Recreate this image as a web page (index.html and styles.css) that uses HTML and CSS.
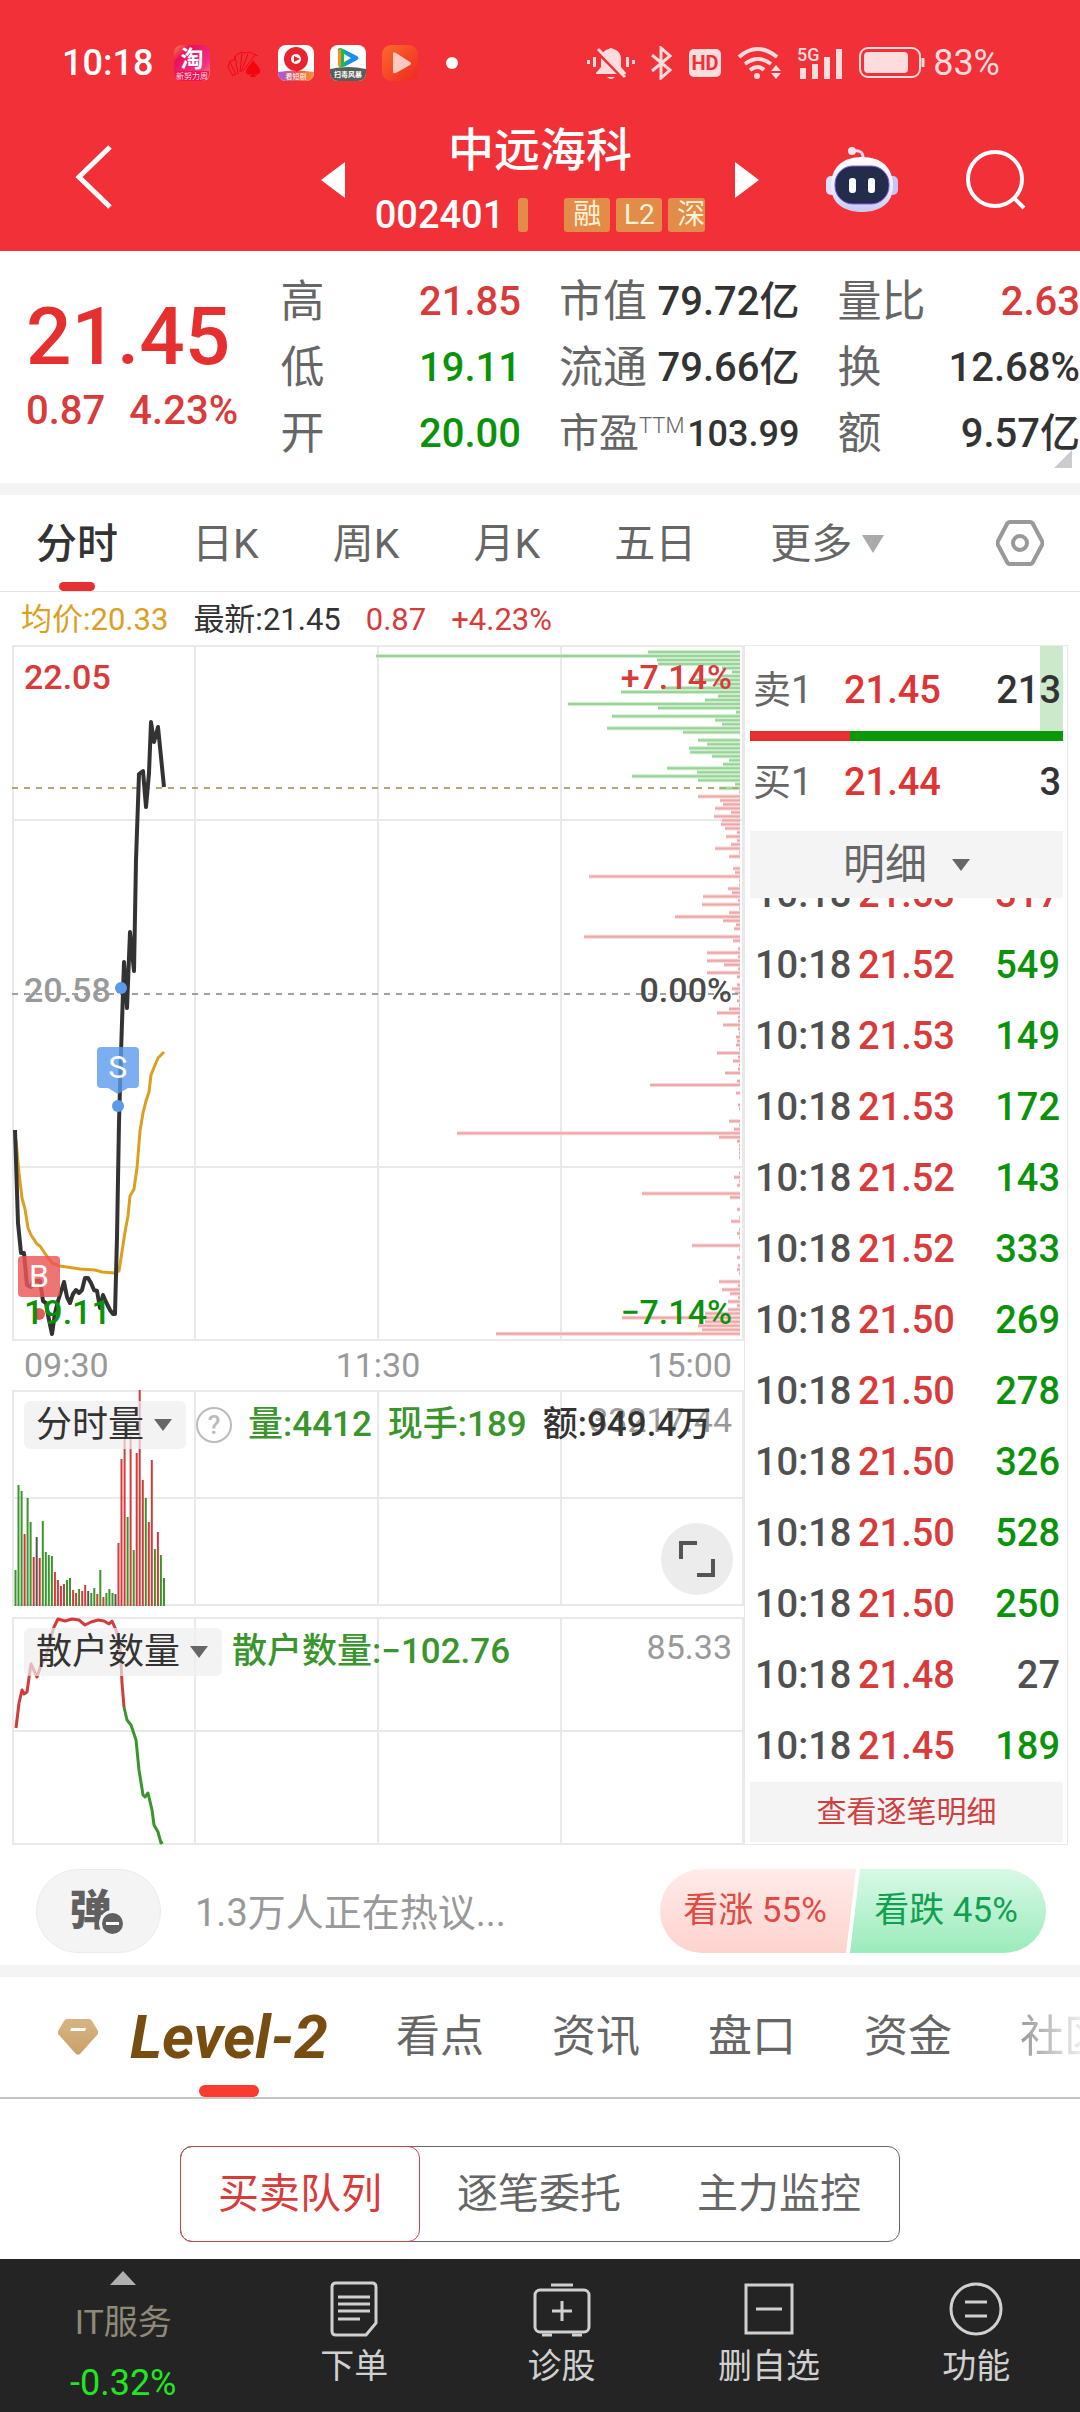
FILE: index.html
```html
<!DOCTYPE html>
<html lang="zh-CN">
<head>
<meta charset="utf-8">
<meta name="viewport" content="width=device-width, initial-scale=1">
<title>中远海科 002401</title>
<link rel="stylesheet" href="styles.css">
</head>
<body>
<header class="top">
  <div class="status">
    <span class="status-time">10:18</span>
    <div class="status-apps">
      <svg width="36" height="36" viewBox="0 0 36 36"><defs><linearGradient id="tb" x1="0" y1="0" x2="1" y2="1"><stop offset="0" stop-color="#f78a3c"/><stop offset=".25" stop-color="#e8125a"/><stop offset=".7" stop-color="#f0308a"/><stop offset="1" stop-color="#f59a50"/></linearGradient></defs><rect width="36" height="36" rx="8" fill="url(#tb)"/><path d="M1 26h34v3a8 8 0 0 1-8 7H9a8 8 0 0 1-8-7z" fill="#f2124e"/><text x="18" y="22" font-size="23" font-weight="700" fill="#fff" text-anchor="middle">淘</text><text x="18" y="34" font-size="8" fill="#ffd9e0" text-anchor="middle">新努力周</text></svg>
      <svg width="36" height="36" viewBox="0 0 36 36"><g fill="none" stroke="#f5060f" stroke-width="1" stroke-linejoin="round"><path d="M7 31l-5-9 2-6 4-1 2-5 6-3 3 1 4-1 5 2 4 2M7 31l2-3M10 30L4 17M12 29L9 11M14 27L16 8M15 27l7-18M17 26L29 10"/></g><path d="M27 15c3 5 8 7 7 12-1 3-5 4-6 1l2 4h-6l2-4c-1 3-6 2-6-1 0-5 5-7 7-12z" fill="#f5060f"/></svg>
      <svg width="36" height="36" viewBox="0 0 36 36"><defs><linearGradient id="bd" x1="0" x2="1"><stop offset="0" stop-color="#a25be0"/><stop offset=".6" stop-color="#f0603c"/><stop offset="1" stop-color="#f8963c"/></linearGradient></defs><rect width="36" height="36" rx="8" fill="#fff"/><path d="M0 27q18-3 36 0v1a8 8 0 0 1-8 8H8a8 8 0 0 1-8-8z" fill="url(#bd)"/><circle cx="18" cy="14" r="12" fill="#e8232f"/><path d="M9 20l10 7 9-7z" fill="#e8232f"/><circle cx="18" cy="14" r="5" fill="#fff"/><path d="M16 11l6 3-6 3z" fill="#e8232f"/><text x="18" y="34" font-size="7" fill="#fff" text-anchor="middle">看短剧</text></svg>
      <svg width="36" height="36" viewBox="0 0 36 36"><rect width="36" height="36" rx="8" fill="#fff"/><path d="M0 24q18-4 36 0v4a8 8 0 0 1-8 8H8a8 8 0 0 1-8-8z" fill="#55605a"/><path d="M8 4q2-2 5 0l13 7q3 2 0 4l-13 7q-4 1-5-2z" fill="#19b955"/><path d="M13 4l14 7q3 2 0 4l-13 7 6-9z" fill="#1c8df0"/><path d="M8 6v13q0 3 3 2V4q-2 0-3 2z" fill="#ff8a1e"/><path d="M14 9l7 4-7 4z" fill="#fff"/><text x="18" y="32" font-size="7" font-weight="700" fill="#fff" text-anchor="middle">扫毒风暴</text></svg>
      <svg width="36" height="36" viewBox="0 0 36 36"><defs><linearGradient id="vd" x1="0" y1="0" x2="1" y2="1"><stop offset="0" stop-color="#fb6a2c"/><stop offset="1" stop-color="#f02820"/></linearGradient></defs><rect width="36" height="36" rx="9" fill="url(#vd)"/><path d="M11 9q0-3 3-1l14 9q2 1 0 3l-14 8q-3 1-3-1z" fill="#ffc9bd"/></svg>
      <span class="status-dot"></span>
    </div>
    <div class="status-sys">
      <svg width="48" height="34" viewBox="0 0 48 34" fill="#fddcdd"><path d="M22 3a2.500 2.500 0 0 1 4 0c5 1 8 5 8 10v8l5 6v1H9v-1l5-6v-8c0-5 3-9 8-10z"/><path d="M20 31h8q-4 4-8 0z"/><rect y="14" width="3" height="4"/><rect x="6" y="11" width="3" height="10"/><rect x="39" y="11" width="3" height="10"/><rect x="45" y="14" width="3" height="4"/><path d="M8 4l30 30" stroke="#f13037" stroke-width="3"/><path d="M11 3l27 28" stroke="#fddcdd" stroke-width="3"/></svg>
      <svg width="22" height="34" viewBox="0 0 22 34" fill="none" stroke="#fddcdd" stroke-width="3"><path d="M1 9l18 15-9 8V2l9 8L1 25"/></svg>
      <svg width="32" height="28" viewBox="0 0 32 28"><rect width="32" height="28" rx="5" fill="#fddcdd"/><text x="16" y="21" font-size="20" font-weight="700" fill="#f13037" text-anchor="middle">HD</text></svg>
      <svg width="44" height="34" viewBox="0 0 44 34" fill="none" stroke="#fddcdd" stroke-width="4"><path d="M2 11q18-16 38 0M8 18q13-10 26 0M13 24q8-6 14 0"/><circle cx="20" cy="30" r="3" fill="#fddcdd" stroke="none"/><path d="M34 25l5-6 5 6zM34 27l5 6 5-6z" fill="#fddcdd" stroke="none"/></svg>
      <svg width="46" height="34" viewBox="0 0 46 34" fill="#fddcdd"><text y="15" font-size="18" font-weight="500">5G</text><rect x="3" y="22" width="6" height="11"/><rect x="15" y="18" width="6" height="15"/><rect x="27" y="11" width="6" height="22"/><rect x="39" y="3" width="6" height="30"/></svg>
      <svg width="66" height="32" viewBox="0 0 66 32"><rect x="1" y="1" width="60" height="29" rx="8" fill="none" stroke="#fddcdd" stroke-width="2"/><rect x="5" y="5" width="44" height="21" rx="4" fill="#fddcdd"/><path d="M64 11v9" stroke="#fddcdd" stroke-width="3"/></svg>
      <span class="status-battery">83%</span>
    </div>
  </div>
  <nav class="title-bar">
    <button class="icon-btn back" aria-label="返回"><svg width="40" height="68" viewBox="0 0 40 68" fill="none" stroke="#fff" stroke-width="5"><path d="M36 4L5 34l31 30"/></svg></button>
    <div class="stock">
      <button class="icon-btn" aria-label="上一只"><svg width="24" height="36" viewBox="0 0 24 36" fill="#fff"><path d="M24 0v36L0 18z"/></svg></button>
      <div class="stock-id">
        <h1>中远海科</h1>
        <div class="stock-code">
          <span class="code">002401</span><i class="code-mark"></i>
          <span class="badges"><b class="badge">融</b><b class="badge">L2</b><b class="badge badge-cut">深</b></span>
        </div>
      </div>
      <button class="icon-btn" aria-label="下一只"><svg width="24" height="36" viewBox="0 0 24 36" fill="#fff"><path d="M0 0v36l24-18z"/></svg></button>
    </div>
    <div class="tools">
      <button class="icon-btn robot" aria-label="智能助手"><svg width="72" height="68" viewBox="0 0 72 68"><defs><linearGradient id="hd" x1="0" y1="0" x2="0" y2="1"><stop offset="0" stop-color="#fff"/><stop offset=".6" stop-color="#ece9ff"/><stop offset="1" stop-color="#c5c8f2"/></linearGradient></defs><path d="M27 5q11-2 10 9" fill="none" stroke="#f4dcec" stroke-width="3"/><circle cx="26" cy="5" r="4" fill="#fbe6ee"/><rect y="30" width="10" height="19" rx="5" fill="#dfe0fa"/><rect x="62" y="30" width="10" height="19" rx="5" fill="#c9c4f5"/><path d="M36 11c20 0 31 11 31 29S53 66 36 66 5 58 5 40 16 11 36 11z" fill="url(#hd)"/><rect x="9" y="20" width="54" height="38" rx="18" fill="#242c4c" stroke="#7a5cf0" stroke-width="1"/><rect x="23" y="32" width="7" height="15" rx="3" fill="#fff"/><rect x="42" y="32" width="7" height="15" rx="3" fill="#fff"/></svg></button>
      <button class="icon-btn" aria-label="搜索"><svg width="60" height="60" viewBox="0 0 60 60" fill="none" stroke="#fff" stroke-width="4"><circle cx="29" cy="29" r="27"/><path d="M47 47l11 11"/></svg></button>
    </div>
  </nav>
</header>

<section class="quote">
  <div class="price">
    <strong>21.45</strong>
    <p><span>0.87</span><span>4.23%</span></p>
  </div>
  <dl class="stats">
    <div><dt>高</dt><dd class="up">21.85</dd></div>
    <div><dt>低</dt><dd class="down">19.11</dd></div>
    <div><dt>开</dt><dd class="down">20.00</dd></div>
  </dl>
  <dl class="stats">
    <div><dt>市值</dt><dd>79.72亿</dd></div>
    <div><dt>流通</dt><dd>79.66亿</dd></div>
    <div class="tight"><dt>市盈<sup>TTM</sup></dt><dd>103.99</dd></div>
  </dl>
  <dl class="stats">
    <div><dt>量比</dt><dd class="up">2.63</dd></div>
    <div><dt>换</dt><dd>12.68%</dd></div>
    <div><dt>额</dt><dd>9.57亿</dd></div>
  </dl>
  <i class="corner"></i>
</section>

<nav class="periods">
  <button class="period is-active">分时</button>
  <button class="period">日K</button>
  <button class="period">周K</button>
  <button class="period">月K</button>
  <button class="period">五日</button>
  <button class="period more">更多<i class="caret caret-light"></i></button>
  <button class="icon-btn settings" aria-label="图表设置"><svg width="48" height="48" viewBox="0 0 48 48" fill="none" stroke="#999" stroke-width="4"><path d="M14 3h20q2 0 3 2l9 17q1 2 0 4l-9 17q-1 2-3 2H14q-2 0-3-2L2 26q-1-2 0-4l9-17q1-2 3-2z"/><circle cx="24" cy="24" r="7"/></svg></button>
</nav>

<p class="legend"><span class="avg">均价:20.33</span><span>最新:21.45</span><span class="up">0.87</span><span class="up">+4.23%</span></p>

<main class="board">
  <div class="charts">
    <div class="chart chart-price">
      <svg class="plot" viewBox="0 0 732 696" preserveAspectRatio="none">
        <g class="grid"><path d="M1 1H731V695H1zM183 0V696M366 0V696M549 0V696M0 175H732M0 522H732"/></g>
        <g id="depth"></g>
        <path d="M0 143H728" class="dash dash-last"/>
        <path d="M0 349H728" class="dash dash-base"/>
        <polyline class="line line-avg" points="4,495 7,528 10,553 13,564 16,583 19,590 25,599 28,601 34,610 40,618 48,621 68,624 83,625 90,627 103,628 107,626 109,613 113,587 116,571 118,551 122,544 125,523 128,486 131,468 134,456 137,447 139,430 143,420 146,413 152,407"/>
        <polyline class="line line-price" points="3,485 6,578 9,608 12,608 15,640 19,642 21,636 28,636 31,656 34,658 36,670 40,689 43,668 46,656 52,637 55,652 58,658 61,649 64,645 67,648 70,645 73,633 76,633 79,638 82,645 85,646 88,663 91,650 94,657 98,665 101,669 103,669 105,592 107,477 109,408 112,317 115,363 118,287 122,326 124,215 127,129 131,126 134,162 137,128 139,77 142,97 146,82 152,142"/>
        <g fill="#5a9ae8"><circle cx="109" cy="343" r="6"/><circle cx="106" cy="461" r="6"/></g>
        <circle cx="27" cy="669" r="6" fill="#e35a58"/>
      </svg>
      <span class="axis axis-left axis-top up">22.05</span>
      <span class="axis axis-left axis-mid muted">20.58</span>
      <span class="axis axis-left axis-bottom down">19.11</span>
      <span class="axis axis-right axis-top up">+7.14%</span>
      <span class="axis axis-right axis-mid dim">0.00%</span>
      <span class="axis axis-right axis-bottom down">−7.14%</span>
      <span class="flag flag-sell">S</span>
      <span class="flag flag-buy">B</span>
    </div>
    <div class="times"><span>09:30</span><span>11:30</span><span>15:00</span></div>
    <div class="chart chart-volume">
      <svg class="plot" viewBox="0 0 732 216" preserveAspectRatio="none">
        <g class="grid"><path d="M1 1H731V215H1zM183 0V216M366 0V216M549 0V216M0 108H732"/></g>
        <g id="volume"></g>
      </svg>
      <span class="scale">33217.44</span>
      <div class="chart-head">
        <button class="pill">分时量<i class="caret"></i></button>
        <button class="help" aria-label="说明">?</button>
        <span class="green">量:4412</span><span class="green">现手:189</span><span>额:949.4万</span>
      </div>
      <button class="expand" aria-label="全屏"><svg width="36" height="36" viewBox="0 0 36 36" fill="none" stroke="#555" stroke-width="4"><path d="M2 18V2h16M34 18v16H18"/></svg></button>
    </div>
    <div class="chart chart-retail">
      <svg class="plot" viewBox="0 0 732 228" preserveAspectRatio="none">
        <g class="grid"><path d="M1 1H731V227H1zM183 0V228M366 0V228M549 0V228M0 114H732"/></g>
        <polyline class="line line-thin" stroke="#d23b3b" points="4,111 7,86 10,73 12,77 15,75 19,47 25,60 29,48 34,40 38,23 42,10 46,2 53,4 60,2 67,3 73,8 79,5 86,3 92,4 97,7 100,4 104,13 108,26 110,66 112,90"/>
        <polyline class="line line-thin" stroke="#3a962c" points="112,90 115,103 119,108 124,123 127,153 131,178 133,180 136,176 140,193 142,208 146,215 149,226 151,225"/>
      </svg>
      <span class="scale">85.33</span>
      <div class="chart-head">
        <button class="pill">散户数量<i class="caret"></i></button>
        <span class="green">散户数量:−102.76</span>
      </div>
    </div>
  </div>

  <aside class="book">
    <div class="level level-ask"><span>卖1</span><b>21.45</b><em>213</em></div>
    <div class="ratio"><i></i></div>
    <div class="level"><span>买1</span><b>21.44</b><em>3</em></div>
    <button class="detail">明细<i class="caret"></i></button>
    <div class="ticks">
      <table>
        <tr><td>10:18</td><td>21.53</td><td class="up">317</td></tr>
        <tr><td>10:18</td><td>21.52</td><td class="down">549</td></tr>
        <tr><td>10:18</td><td>21.53</td><td class="down">149</td></tr>
        <tr><td>10:18</td><td>21.53</td><td class="down">172</td></tr>
        <tr><td>10:18</td><td>21.52</td><td class="down">143</td></tr>
        <tr><td>10:18</td><td>21.52</td><td class="down">333</td></tr>
        <tr><td>10:18</td><td>21.50</td><td class="down">269</td></tr>
        <tr><td>10:18</td><td>21.50</td><td class="down">278</td></tr>
        <tr><td>10:18</td><td>21.50</td><td class="down">326</td></tr>
        <tr><td>10:18</td><td>21.50</td><td class="down">528</td></tr>
        <tr><td>10:18</td><td>21.50</td><td class="down">250</td></tr>
        <tr><td>10:18</td><td>21.48</td><td>27</td></tr>
        <tr><td>10:18</td><td>21.45</td><td class="down">189</td></tr>
      </table>
    </div>
    <a class="all-ticks" href="#ticks">查看逐笔明细</a>
  </aside>
</main>

<section class="talk">
  <button class="danmu" aria-label="弹幕开关">弹<i></i></button>
  <a class="talk-text" href="#talk">1.3万人正在热议...</a>
  <div class="vote"><button class="vote-up">看涨 55%</button><button class="vote-down">看跌 45%</button></div>
</section>

<nav class="sections">
  <svg class="gem" width="40" height="36" viewBox="0 0 40 36"><defs><linearGradient id="gm" x1="0" y1="0" x2="0" y2="1"><stop offset="0" stop-color="#d6b583"/><stop offset="1" stop-color="#c9a068"/></linearGradient></defs><path d="M9 0h22q2 0 3 2l6 10q1 2-1 4L22 35q-2 1-4 0L1 16q-2-2-1-4L6 2q1-2 3-2z" fill="url(#gm)"/><path d="M13 9h15l-1 3H12z" fill="#fff"/></svg>
  <a class="section level2" href="#level2">Level-2</a>
  <a class="section" href="#views">看点</a>
  <a class="section" href="#news">资讯</a>
  <a class="section" href="#orders">盘口</a>
  <a class="section" href="#funds">资金</a>
  <a class="section" href="#community">社区</a>
</nav>

<section class="queue">
  <div class="segments">
    <button class="segment is-active">买卖队列</button>
    <button class="segment">逐笔委托</button>
    <button class="segment">主力监控</button>
  </div>
</section>

<footer class="dock">
  <a class="dock-index" href="#sector"><i class="rise"></i><span>IT服务</span><b>-0.32%</b></a>
  <a class="dock-item" href="#order"><svg width="48" height="56" viewBox="0 0 48 56" fill="none" stroke="#d0d0d0" stroke-width="3"><path d="M6 2h36q4 0 4 4v36L36 54H6q-4 0-4-4V6q0-4 4-4z"/><path d="M8 16h32M8 23h32M8 30h32M8 38h22"/></svg><span>下单</span></a>
  <a class="dock-item" href="#diagnose"><svg width="58" height="56" viewBox="0 0 58 56" fill="none" stroke="#d0d0d0" stroke-width="3"><path d="M18 4h22"/><rect x="2" y="9" width="54" height="42" rx="5"/><path d="M29 20v20M19 30h20M9 54h10M39 54h10"/></svg><span>诊股</span></a>
  <a class="dock-item" href="#remove"><svg width="50" height="56" viewBox="0 0 50 56" fill="none" stroke="#d0d0d0" stroke-width="3"><rect x="2" y="4" width="46" height="48"/><path d="M12 28h26"/></svg><span>删自选</span></a>
  <a class="dock-item" href="#tools"><svg width="54" height="56" viewBox="0 0 54 56" fill="none" stroke="#d0d0d0" stroke-width="3"><circle cx="27" cy="28" r="25"/><path d="M16 21h22M16 35h22"/></svg><span>功能</span></a>
</footer>
<script src="app.js"></script>
</body>
</html>
```
FILE: styles.css
```css
* { box-sizing: border-box; }

body {
  margin: 0;
  background: #fff;
  color: #333;
  font-family: Roboto, "Noto Sans CJK SC", sans-serif;
  overflow-x: hidden;
}

h1, p, dl, dd { margin: 0; }
i, em { font-style: normal; }
a { color: inherit; text-decoration: none; }
svg { display: block; flex: none; }

button {
  padding: 0;
  border: 0;
  background: none;
  color: inherit;
  font: inherit;
  white-space: nowrap;
}

.up { color: #d93a3a; }
.down { color: #0a930a; }
.green { color: #3a962c; }
.muted { color: #999; }
.dim { color: #4a4a4a; }

.caret {
  display: inline-block;
  border: 9px solid transparent;
  border-top: 12px solid #666;
  border-bottom: 0;
}

.caret-light {
  border-width: 18px 11px 0;
  border-top-color: #aaa;
}

/* Status bar and title */
.top {
  background: #f13037;
  color: #fff;
}

.status {
  display: flex;
  align-items: center;
  padding: 40px 80px 0 62px;
  line-height: 46px;
}

.status-time {
  width: 112px;
  font-size: 36px;
  font-weight: 500;
}

.status-apps {
  display: flex;
  align-items: center;
  gap: 16px;
}

.status-dot {
  width: 12px;
  height: 12px;
  margin-left: 12px;
  border-radius: 50%;
  background: #fff;
}

.status-sys {
  display: flex;
  align-items: center;
  gap: 16px;
  margin-left: auto;
  color: #fddcdd;
}

.status-battery {
  margin-left: -8px;
  font-size: 36px;
}

.title-bar {
  display: grid;
  grid-template-columns: 247px 438px 1fr;
  align-items: center;
  padding: 34px 54px 11px 74px;
}

.icon-btn { display: flex; }
.back { padding-bottom: 6px; }

.stock {
  display: flex;
  align-items: center;
  justify-content: space-between;
}

.stock-id h1 {
  text-align: center;
  font-size: 46px;
  font-weight: 500;
  line-height: 60px;
}

.stock-code {
  display: flex;
  align-items: center;
  margin-top: 10px;
  line-height: 50px;
}

.code {
  font-size: 38px;
  font-weight: 500;
}

.code-mark {
  width: 10px;
  height: 34px;
  margin: 0 36px 0 14px;
  border-radius: 3px;
  background: #e38b48;
}

.badges {
  display: flex;
  gap: 6px;
}

.badge {
  width: 46px;
  border-radius: 3px;
  background: #e38b48;
  color: #fff3d8;
  font-size: 28px;
  font-weight: 400;
  line-height: 34px;
  text-align: center;
}

.badge-cut {
  width: 37px;
  padding-left: 9px;
  overflow: hidden;
  text-align: left;
}

.tools {
  display: flex;
  align-items: center;
  justify-content: flex-end;
  gap: 68px;
}

/* Quote summary */
.quote {
  position: relative;
  display: grid;
  grid-template-columns: 216fr 240fr 240fr 242fr;
  gap: 38px;
  padding: 18px 0 16px 26px;
  border-bottom: 12px solid #f4f4f4;
}

.price {
  color: #e63030;
  white-space: nowrap;
}

.price strong {
  display: block;
  padding-top: 16px;
  font-size: 80px;
  font-weight: 500;
  line-height: 104px;
}

.price p {
  display: flex;
  gap: 24px;
  color: #d93a3a;
  font-size: 40px;
  font-weight: 500;
  line-height: 44px;
}

.stats div {
  display: flex;
  justify-content: space-between;
  line-height: 66px;
  white-space: nowrap;
}

.stats dt {
  color: #666;
  font-size: 44px;
}

.stats dd {
  font-size: 40px;
  font-weight: 500;
}

.stats .tight dt { font-size: 40px; }
.stats .tight dd { font-size: 36px; }

.stats sup {
  font-size: 22px;
  font-weight: 300;
  line-height: 0;
}

.corner {
  position: absolute;
  right: 8px;
  bottom: 15px;
  border-left: 18px solid transparent;
  border-bottom: 18px solid #ccc;
}

/* Period tabs */
.periods {
  display: flex;
  gap: 74px;
  padding: 0 36px;
  border-bottom: 1px solid #e4e4e4;
}

.period {
  position: relative;
  display: flex;
  align-items: center;
  gap: 10px;
  padding-top: 2px;
  color: #666;
  font-size: 41px;
  line-height: 94px;
}

.period.is-active {
  color: #333;
  font-weight: 500;
}

.period.is-active::after,
.level2::after {
  content: "";
  position: absolute;
  bottom: 0;
  left: 50%;
  width: 36px;
  height: 9px;
  margin-left: -18px;
  border-radius: 5px;
  background: #e63030;
}

.settings {
  align-items: center;
  margin-left: auto;
}

.legend {
  display: flex;
  gap: 25px;
  padding: 3px 21px 0;
  font-size: 31px;
  line-height: 50px;
}

.legend .avg { color: #dba01e; }

/* Chart board */
.board {
  display: grid;
  grid-template-columns: minmax(0, 732fr) minmax(0, 324fr);
  padding: 0 12px;
}

.chart { position: relative; }

.plot {
  width: 100%;
  height: 100%;
  overflow: visible;
}

.chart-price { height: 696px; }
.chart-volume { height: 216px; }
.chart-retail { height: 228px; margin-top: 11px; }

.grid {
  fill: none;
  stroke: #e9e9e9;
  stroke-width: 2;
}

.line {
  fill: none;
  stroke-linejoin: round;
}

.line-price { stroke: #333; stroke-width: 4; }
.line-avg { stroke: #dba01e; stroke-width: 3; }
.line-thin { stroke-width: 3; }

.dash {
  fill: none;
  stroke-width: 2;
  stroke-dasharray: 6 6;
}

.dash-last { stroke: #b9a578; }
.dash-base { stroke: #a0a0a0; }

.axis {
  position: absolute;
  font-size: 34px;
  font-weight: 500;
  line-height: 40px;
}

.axis-left { left: 12px; }
.axis-right { right: 12px; }
.axis-top { top: 12px; }
.axis-mid { top: 325px; }
.axis-bottom { bottom: 9px; }

.flag {
  position: absolute;
  width: 42px;
  border-radius: 4px;
  color: #fff;
  font-size: 32px;
  line-height: 41px;
  text-align: center;
}

.flag-sell {
  top: 402px;
  left: 12%;
  margin-left: -3px;
  background: rgba(90, 155, 238, .8);
}

.flag-sell::after {
  content: "";
  position: absolute;
  top: 41px;
  left: 11px;
  border: 10px solid transparent;
  border-top: 6px solid rgba(90, 155, 238, .8);
  border-bottom: 0;
}

.flag-buy {
  top: 611px;
  left: 6px;
  background: rgba(235, 85, 85, .82);
}

.times {
  display: flex;
  justify-content: space-between;
  padding: 0 12px;
  color: #999;
  font-size: 34px;
  line-height: 49px;
}

.scale {
  position: absolute;
  top: 10px;
  right: 12px;
  color: #999;
  font-size: 34px;
  line-height: 40px;
}

.chart-head {
  position: absolute;
  top: 11px;
  left: 12px;
  display: flex;
  align-items: center;
  gap: 16px;
  font-size: 35px;
  font-weight: 500;
  line-height: 48px;
  white-space: nowrap;
}

.pill {
  display: flex;
  align-items: center;
  gap: 10px;
  margin-right: -6px;
  padding: 0 14px 0 12px;
  border-radius: 6px;
  background: rgba(238, 238, 238, .7);
  font-size: 36px;
  font-weight: 400;
}

.help {
  width: 36px;
  height: 36px;
  border: 2px solid #bbb;
  border-radius: 50%;
  color: #bbb;
  font-size: 26px;
  line-height: 32px;
}

.expand {
  position: absolute;
  right: 11px;
  bottom: 11px;
  display: grid;
  place-items: center;
  width: 72px;
  height: 72px;
  border-radius: 50%;
  background: #ececec;
}

/* Order book */
.book {
  display: flex;
  flex-direction: column;
  padding: 0 4px 2px 5px;
  border: 1px solid #e9e9e9;
}

.level {
  display: grid;
  grid-template-columns: 91px 1fr auto;
  padding: 0 2px 0 3px;
  font-size: 38px;
  line-height: 82px;
}

.level span { color: #666; }

.level b {
  color: #e03434;
  font-weight: 500;
}

.level em { font-weight: 500; }

.level-ask {
  padding-top: 3px;
  background: linear-gradient(#cce9cc, #cce9cc) right / 23px 100% no-repeat;
}

.ratio {
  height: 10px;
  background: #089808;
}

.ratio i {
  display: block;
  width: 32%;
  height: 100%;
  background: #e63030;
}

.detail {
  display: flex;
  align-items: center;
  justify-content: center;
  gap: 25px;
  margin-top: 8px;
  background: #f4f4f4;
  color: #666;
  font-size: 42px;
  line-height: 67px;
}

.ticks {
  display: flex;
  align-items: flex-end;
  height: 884px;
  overflow: hidden;
}

.ticks table {
  width: 100%;
  border-collapse: collapse;
  color: #505050;
  font-size: 38px;
  font-weight: 500;
  line-height: 71px;
}

.ticks td { padding: 0; }
.ticks td:first-child { width: 108px; padding-left: 5px; }
.ticks td:nth-child(2) { color: #d93a3a; }
.ticks td:last-child { padding-right: 3px; text-align: right; }
.ticks .down { color: #0a930a; }
.ticks .up { color: #d93a3a; }

.all-ticks {
  background: #f4f4f4;
  color: #cf3f3f;
  font-size: 30px;
  line-height: 60px;
  text-align: center;
}

/* Discussion */
.talk {
  display: flex;
  align-items: center;
  padding: 24px 34px 12px 36px;
  border-bottom: 12px solid #f4f4f4;
}

.danmu {
  position: relative;
  width: 125px;
  height: 84px;
  padding-right: 16px;
  border: 1px solid #ebebeb;
  border-radius: 42px;
  background: #f4f4f4;
  color: #606060;
  font-size: 42px;
  font-weight: 900;
  line-height: 68px;
}

.danmu i {
  position: absolute;
  top: 40px;
  left: 62px;
  width: 27px;
  height: 27px;
  border: 3px solid #f4f4f4;
  border-radius: 50%;
  background: linear-gradient(#fff, #fff) center / 13px 3px no-repeat, #606060;
}

.talk-text {
  margin-left: 34px;
  padding-bottom: 3px;
  color: #999;
  font-size: 38px;
}

.vote {
  display: flex;
  width: 386px;
  margin-left: auto;
  border-radius: 42px;
  overflow: hidden;
  font-size: 35px;
  line-height: 84px;
}

.vote-up {
  flex: 194;
  padding-right: 6px;
  background: linear-gradient(#ffebe9, #fed3ce);
  color: #e14942;
  clip-path: polygon(0 0, 100% 0, calc(100% - 10px) 100%, 0 100%);
}

.vote-down {
  flex: 196;
  margin-left: -6px;
  padding-right: 4px;
  background: linear-gradient(#d9f9e7, #9bebbb);
  color: #10a050;
  clip-path: polygon(10px 0, 100% 0, 100% 100%, 0 100%);
}

/* Section tabs */
.sections {
  display: flex;
  align-items: center;
  gap: 68px;
  padding-left: 58px;
  border-bottom: 2px solid #c4c4c4;
  overflow: hidden;
  white-space: nowrap;
}

.gem { margin-right: -36px; }

.section {
  position: relative;
  color: #666;
  font-size: 44px;
  line-height: 120px;
}

.section:last-child {
  background: linear-gradient(90deg, #999, #eee 70%);
  background-clip: text;
  color: transparent;
}

.level2 {
  color: #774d12;
  font-size: 61px;
  font-style: italic;
  font-weight: 700;
}

.level2::after {
  width: 60px;
  height: 12px;
  margin-left: -30px;
  border-radius: 6px;
  background: #fb3a30;
}

/* Queue switch */
.queue {
  display: flex;
  justify-content: center;
  padding: 47px 0 17px;
}

.segments {
  display: flex;
  width: 720px;
  border: 1px solid #666;
  border-radius: 12px;
}

.segment {
  flex: 1;
  border: 1px solid transparent;
  border-radius: 12px;
  color: #666;
  font-size: 41px;
  line-height: 92px;
}

.segment.is-active {
  margin: -1px;
  border-color: #cf4444;
  color: #d93a3a;
}

/* Bottom dock */
.dock {
  display: grid;
  grid-template-columns: 250fr repeat(4, 207fr);
  padding-bottom: 6px;
  background: #242424;
  color: #d0d0d0;
  font-size: 34px;
  line-height: 46px;
}

.dock-index,
.dock-item {
  display: flex;
  flex-direction: column;
  align-items: center;
  padding-top: 22px;
}

.dock-index {
  padding: 12px 4px 0 0;
  color: #8f8a78;
}

.rise {
  border: 13px solid transparent;
  border-top: 0;
  border-bottom: 14px solid #b0b0b0;
}

.dock-index span { margin-top: 14px; }

.dock-index b {
  margin-top: 15px;
  color: #22e622;
  font-size: 36px;
  font-weight: 400;
}

.dock-item span { margin-top: 6px; }
```
FILE: app.js
```js
const NS = 'http://www.w3.org/2000/svg';

function bar(parent, d, stroke, width) {
  const p = document.createElementNS(NS, 'path');
  p.setAttribute('d', d);
  p.setAttribute('stroke', stroke);
  p.setAttribute('stroke-width', width);
  parent.appendChild(p);
}

// Volume traded at each price level, top price first.
const depth = [
  92, 364, 83, 82, 18, 8, 20, 45, 25, 78, 119, 22, 35, 172, 82, 4, 128, 25, 18, 133,
  57, 0, 42, 33, 51, 50, 28, 11, 17, 73, 43, 108, 42, 5, 21, 1, 42, 20, 17, 25,
  9, 26, 18, 19, 15, 3, 14, 3, 9, 25, 1, 11, 0, 0, 7, 5, 151, 1, 1, 12,
  8, 37, 2, 38, 1, 11, 65, 17, 4, 6, 0, 156, 7, 0, 2, 33, 2, 33, 16, 2,
  33, 3, 0, 3, 8, 5, 1, 3, 1, 11, 23, 2, 2, 17, 2, 1, 4, 3, 4, 1,
  23, 2, 7, 1, 2, 15, 0, 3, 90, 0, 4, 0, 0, 2, 1, 0, 0, 11, 1, 6,
  283, 21, 3, 1, 1, 1, 1, 0, 0, 0, 1, 6, 1, 3, 0, 98, 10, 0, 0, 3,
  0, 1, 9, 0, 1, 3, 1, 0, 48, 1, 0, 3, 0, 2, 3, 1, 0, 21, 2, 18,
  10, 2, 12, 3, 12, 35, 118, 35, 42, 38, 244
];
const askLevels = 35;
const depthPlot = document.getElementById('depth');
depth.forEach((len, i) => {
  if (!len) return;
  const y = (7 + i * 4.01).toFixed(1);
  const d = `M728 ${y}h-${len}`;
  const ask = i < askLevels;
  bar(depthPlot, d, ask ? '#c8edc8' : '#fbd3d3', 4);
  bar(depthPlot, d, ask ? '#9dd29d' : '#eba9a9', 2);
});

// Volume per minute: g falling, r rising, k flat.
const volume = 'g36 g121 g115 r72 g108 g84 r49 k69 r48 g85 g54 g51 g50 r34 r26 r20 r22 g26 g28 r16 r13 g17 r15 r21 k15 g13 g18 r12 g36 r9 g13 g17 g13 k12 r63 r147 r168 g89 r170 g56 r153 r216 r126 g108 r84 r146 g57 r74 g51 g28'.split(' ');
const tone = { g: '#3a962c', r: '#d23b3b', k: '#555' };
const volumePlot = document.getElementById('volume');
volume.forEach((v, i) => {
  bar(volumePlot, `M${(3.5 + i * 3.03).toFixed(1)} 216v-${v.slice(1)}`, tone[v[0]], 2);
});
```
